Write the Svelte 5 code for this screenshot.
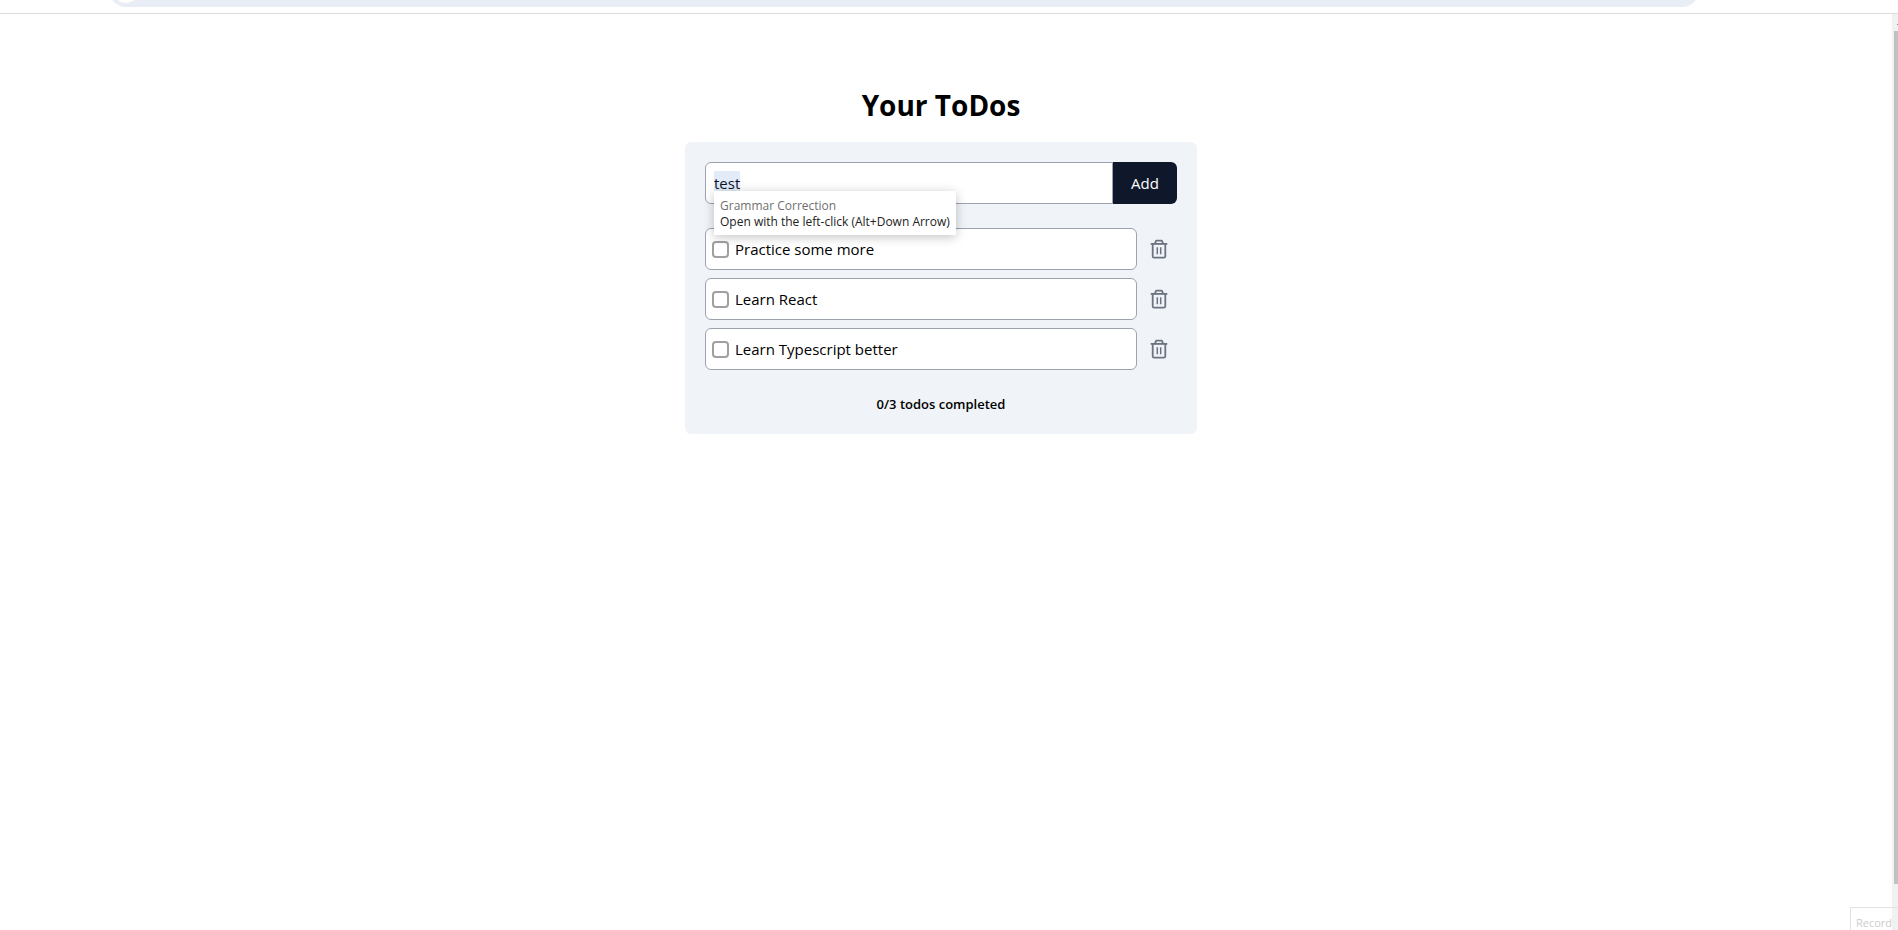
<script>
  let draft = $state('test');
  let todos = $state([
    { id: 3, title: 'Practice some more', completed: false },
    { id: 2, title: 'Learn React', completed: false },
    { id: 1, title: 'Learn Typescript better', completed: false }
  ]);
  let completed = $derived(todos.filter((t) => t.completed).length);

  function addTodo(event) {
    event.preventDefault();
    if (!draft.trim()) return;
    todos = [{ id: Date.now(), title: draft, completed: false }, ...todos];
    draft = '';
  }

  function removeTodo(id) {
    todos = todos.filter((t) => t.id !== id);
  }
</script>

<div class="window">
  <div class="toolbar"><div class="address"><span class="dot"></span></div></div>
  <div class="viewport">
    <main>
      <h1>Your ToDos</h1>
      <div class="card">
        <form onsubmit={addTodo}>
          <div class="field">
            <input class="draft" aria-label="New todo" bind:value={draft} />
            <div class="mark" aria-hidden="true">{draft}</div>
            <div class="tooltip" role="tooltip">
              <span class="tip-title">Grammar Correction</span>
              <span>Open with the left-click (Alt+Down Arrow)</span>
            </div>
          </div>
          <button class="add" type="submit">Add</button>
        </form>
        <ul>
          {#each todos as todo (todo.id)}
            <li>
              <label>
                <input type="checkbox" bind:checked={todo.completed} />
                <span>{todo.title}</span>
              </label>
              <button class="remove" type="button" aria-label="Delete todo" onclick={() => removeTodo(todo.id)}>
                <svg viewBox="0 0 20 20" width="20" height="20" fill="none" stroke="currentColor" stroke-width="1.8" stroke-linejoin="round">
                  <path d="M1.7 4.9h16.6" />
                  <path d="M6 4.6l.8-2.3q.2-.6.8-.6h4.8q.6 0 .8.6l.8 2.3" />
                  <path d="M3.7 4.9v12.3q0 1.5 1.5 1.5h9.6q1.5 0 1.5-1.5V4.9" />
                  <path d="M8.3 8.2v7M11.7 8.2v7" stroke-width="1.5" />
                </svg>
              </button>
            </li>
          {/each}
        </ul>
        <p>{completed}/{todos.length} todos completed</p>
      </div>
    </main>
    <div class="scrollbar"><span class="arrow"></span><span class="thumb"></span></div>
    <button class="record" type="button">Record</button>
  </div>
</div>

<style>
  * {
    box-sizing: border-box;
  }
  :global(body) {
    margin: 0;
    background: #fff;
  }
  .window {
    display: flex;
    flex-direction: column;
    min-height: 100vh;
    color: #000;
    font: 15px/24px 'Open Sans', 'Segoe UI', sans-serif;
  }
  .toolbar {
    flex: none;
    overflow: hidden;
    padding: 0 199px 6px 109px;
    border-bottom: 1px solid #dcdcdc;
  }
  .address {
    height: 34px;
    margin-top: -27px;
    padding: 4px;
    border-radius: 17px;
    background: #e9eef6;
  }
  .dot {
    display: block;
    width: 26px;
    height: 26px;
    border-radius: 50%;
    background: #fff;
  }
  .viewport {
    position: relative;
    flex: 1;
    display: flex;
    overflow: hidden;
  }
  main {
    flex: 1;
    display: flex;
    flex-direction: column;
    align-items: center;
    padding: 73px 10px 20px 0;
  }
  h1 {
    margin: 0 0 19px;
    font-size: 28px;
    line-height: 36px;
    font-weight: 700;
  }
  .card {
    width: 100%;
    max-width: 512px;
    padding: 20px;
    border-radius: 6px;
    background: #f0f4f8;
  }
  form {
    display: flex;
  }
  .field {
    position: relative;
    flex: 1;
  }
  .draft {
    display: block;
    width: 100%;
    height: 42px;
    padding: 0 8px;
    border: 1px solid #9ca3af;
    border-radius: 6px 0 0 6px;
    background: #fff;
    color: inherit;
    font: inherit;
    outline: none;
  }
  .mark {
    position: absolute;
    left: 9px;
    top: 9px;
    height: 24px;
    background: rgba(80, 130, 220, 0.16);
    color: transparent;
    pointer-events: none;
  }
  .tooltip {
    position: absolute;
    z-index: 1;
    left: 9px;
    top: 29px;
    display: flex;
    flex-direction: column;
    padding: 7px 6px 5px;
    background: #fff;
    box-shadow: 0 2px 10px rgba(0, 0, 0, 0.24);
    color: #222;
    font-size: 12px;
    line-height: 16px;
    font-weight: 500;
    white-space: nowrap;
  }
  .tip-title {
    color: #707070;
  }
  .add {
    width: 64px;
    padding: 0;
    border: 0;
    border-radius: 0 6px 6px 0;
    background: #0f172a;
    color: #fff;
    font: inherit;
  }
  ul {
    display: flex;
    flex-direction: column;
    gap: 8px;
    margin: 24px 0;
    padding: 0;
    list-style: none;
  }
  li {
    display: flex;
  }
  label {
    flex: 1;
    display: flex;
    align-items: center;
    gap: 6px;
    height: 42px;
    padding: 0 6px;
    border: 1px solid #9ca3af;
    border-radius: 6px;
    background: #fff;
  }
  label input {
    appearance: none;
    width: 17px;
    height: 17px;
    margin: 0;
    border: 2px solid #a0a0a0;
    border-radius: 4px;
    background: #fff;
  }
  label input:checked {
    border-color: #0f172a;
    background: #0f172a;
  }
  .remove {
    display: flex;
    align-items: center;
    justify-content: center;
    width: 40px;
    padding: 0 0 0 4px;
    border: 0;
    background: none;
    color: #6b7280;
  }
  p {
    margin: 0;
    font-size: 13px;
    line-height: 20px;
    font-weight: 600;
    text-align: center;
  }
  .scrollbar {
    display: flex;
    flex-direction: column;
    align-items: flex-end;
    width: 6px;
    padding-bottom: 46px;
    background: #f1f1f1;
  }
  .arrow {
    width: 1px;
    height: 1px;
    margin: 10px 0 6px;
    background: #8a8a8a;
  }
  .thumb {
    flex: 1;
    width: 4px;
    background: #c1c1c1;
  }
  .record {
    position: absolute;
    right: 0;
    bottom: -8px;
    width: 48px;
    height: 31px;
    padding: 0 0 0 5px;
    border: 1px solid #e2e2de;
    border-right: 0;
    background: transparent;
    color: #ccc;
    font: 11px/16px 'Open Sans', 'Segoe UI', sans-serif;
    text-align: left;
  }
</style>
